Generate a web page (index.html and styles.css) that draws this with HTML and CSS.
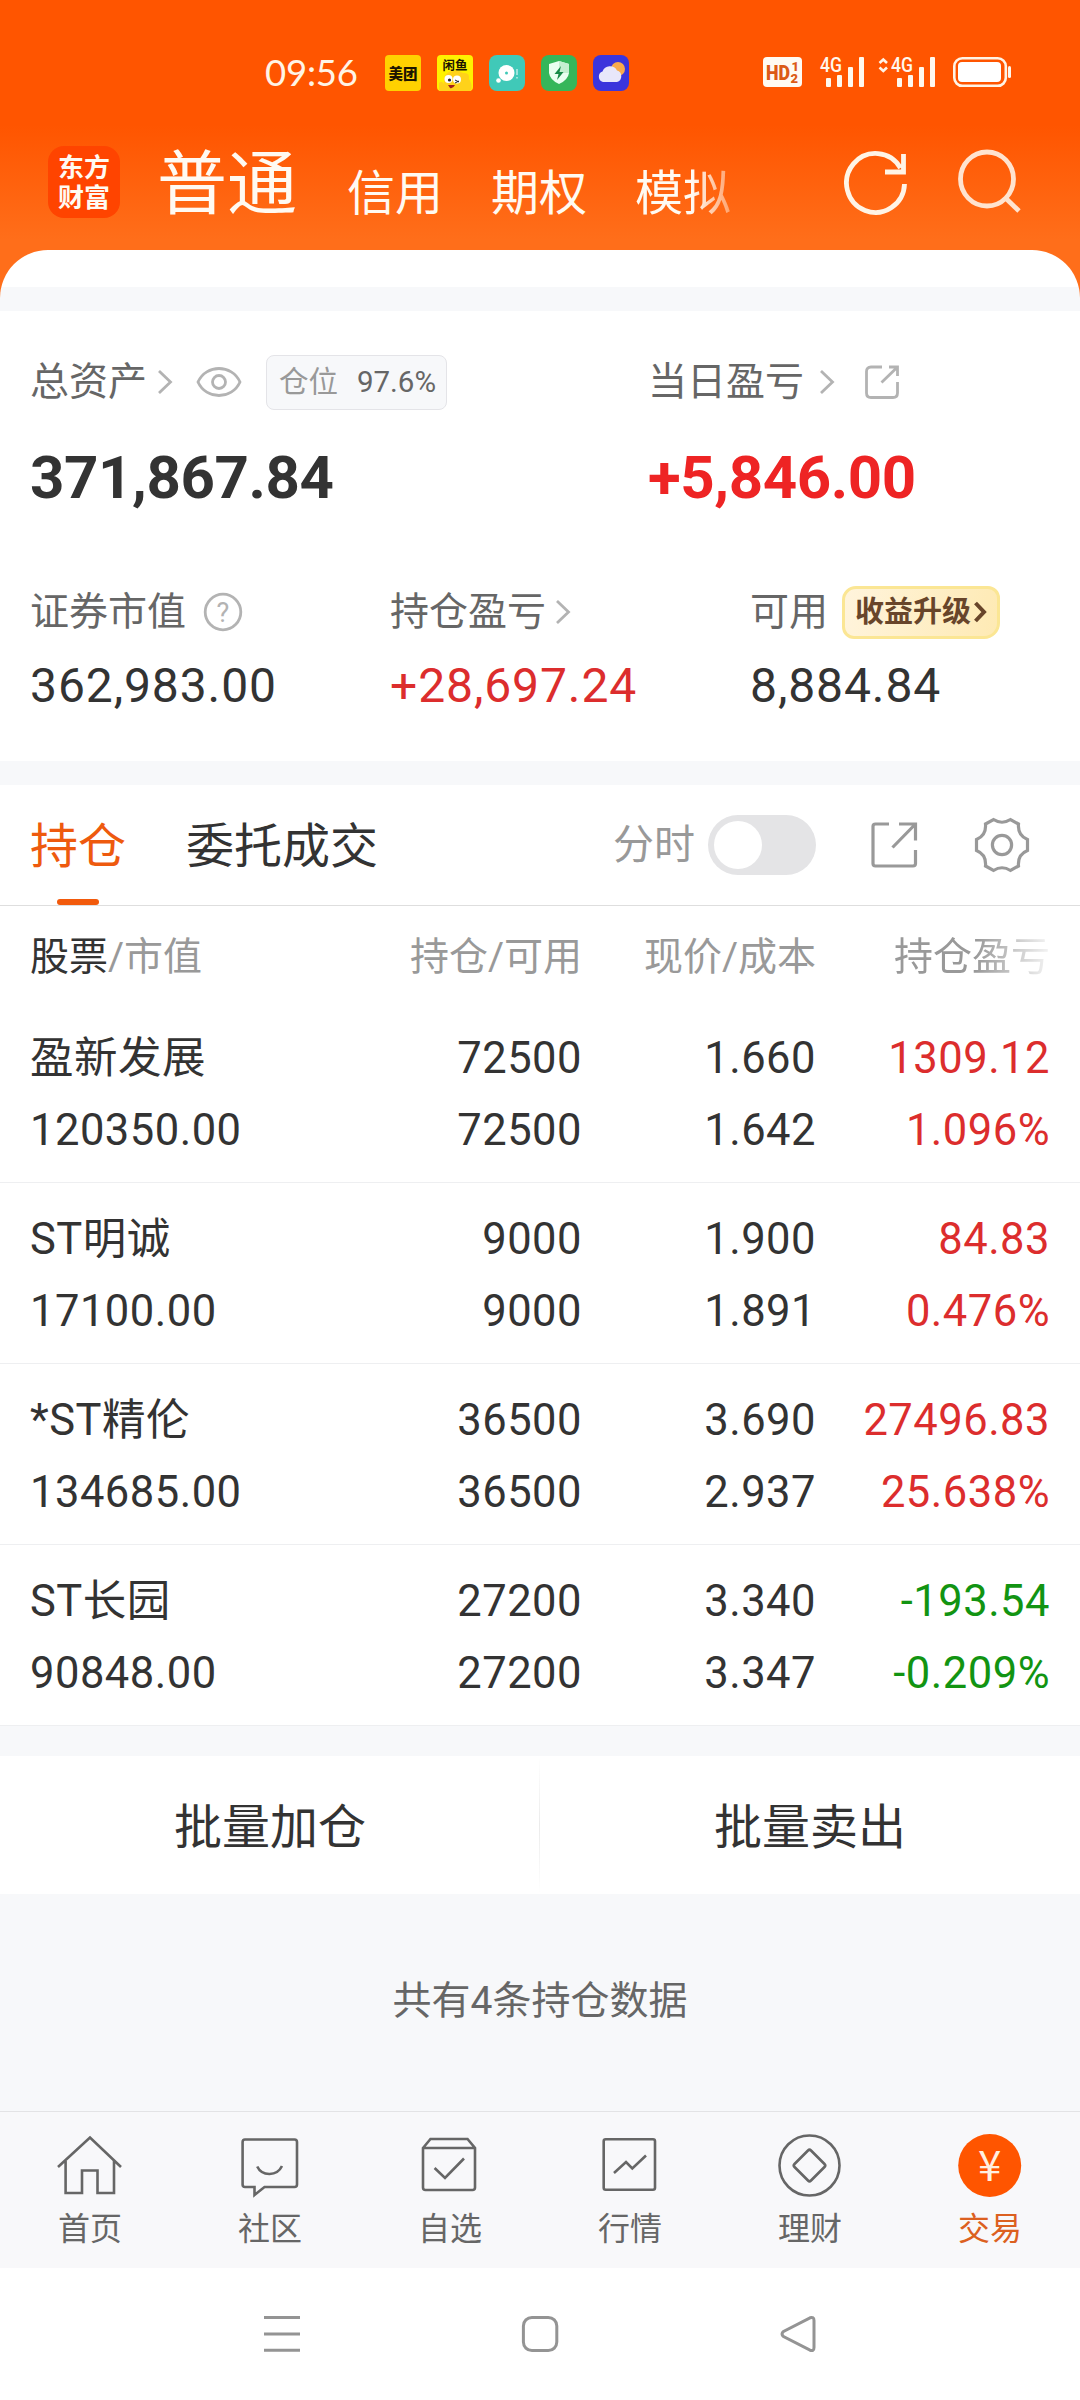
FILE: index.html
```html
<!DOCTYPE html>
<html lang="zh-CN">
<head>
<meta charset="utf-8">
<title>交易</title>
<link rel="stylesheet" href="styles.css">
</head>
<body>
<div class="top">
  <div class="status">
    <span class="clock">09:56</span>
    <div class="apps">
      <svg width="36" height="36" viewBox="0 0 36 36"><rect width="36" height="36" rx="4" fill="#ffd100"/><text x="18" y="23.5" class="app-name" font-size="14.5">美团</text></svg>
      <svg width="36" height="36" viewBox="0 0 36 36"><rect width="36" height="36" rx="4" fill="#fff200"/><text x="18" y="15" class="app-name thin" font-size="12.5">闲鱼</text><path d="M2 36V28Q5 25 7 29Q6 17 16 16Q22 15 26 18Q33 17 32 24Q36 30 34 36Z" fill="#ffd21a"/><circle cx="11.500" cy="24" r="4" fill="#fff"/><circle cx="20" cy="24.500" r="4" fill="#fff"/><circle cx="12.500" cy="25" r="1.600" fill="#222"/><path d="M18 25L22 27M18 28L22 26" stroke="#222" stroke-width="1"/><path d="M11 30H18Q16 34 13 33Z" fill="#a3201a"/></svg>
      <svg width="36" height="36" viewBox="0 0 36 36"><rect width="36" height="36" rx="8" fill="#40c9b8"/><circle cx="17.500" cy="18" r="8" fill="#fff"/><circle cx="17.500" cy="18" r="1.500" fill="#40c9b8"/><circle cx="9.500" cy="25.500" r="2.300" fill="#fff"/><path d="M28 14V20M28 22V23.500" stroke="#b9ece6" stroke-width="1.500"/></svg>
      <svg width="36" height="36" viewBox="0 0 36 36"><rect width="36" height="36" rx="8" fill="#35b65a"/><path d="M18 6L28 9V18Q27 25 18 29Q9 25 8 18V9Z" fill="#e9fff0"/><path d="M18 6L28 9V18H18Z" fill="#c4efd0"/><path d="M20 11L13.500 19H17.500L16 25L22.500 17H18.500Z" fill="#178a46"/></svg>
      <svg width="36" height="36" viewBox="0 0 36 36"><rect width="36" height="36" rx="8" fill="#3b35dc"/><circle cx="25" cy="14" r="7" fill="#f8ab4d"/><path d="M10 27A5.500 5.500 0 0 1 9.500 16.500A8 8 0 0 1 24 15.500A6 6 0 0 1 24 27Z" fill="#e8e7fa"/></svg>
    </div>
    <div class="signals">
      <svg width="250" height="42" viewBox="762 48 250 42">
        <rect x="763" y="57" width="39" height="30" rx="4" fill="#fffaf2"/>
        <text x="766" y="80" class="hd" font-size="21" textLength="24" lengthAdjust="spacingAndGlyphs">HD</text>
        <text x="791.500" y="70.500" class="hd" font-size="13">1</text><text x="790.500" y="83" class="hd" font-size="13">2</text>
        <g fill="#fff8ee">
          <text x="820" y="72" class="net" font-size="20" textLength="22" lengthAdjust="spacingAndGlyphs">4G</text>
          <rect x="826" y="78" width="5" height="9" rx="1"/><rect x="837" y="75" width="5" height="12" rx="1"/><rect x="848" y="67" width="5" height="20" rx="1"/><rect x="859" y="57" width="5" height="30" rx="1"/>
          <text x="891" y="72" class="net" font-size="20" textLength="22" lengthAdjust="spacingAndGlyphs">4G</text>
          <rect x="897" y="78" width="5" height="9" rx="1"/><rect x="908" y="75" width="5" height="12" rx="1"/><rect x="919" y="67" width="5" height="20" rx="1"/><rect x="930" y="57" width="5" height="30" rx="1"/>
          <rect x="958" y="62" width="43" height="20" rx="4" fill="#fff"/><rect x="1008" y="66" width="3" height="12" rx="1.500"/>
        </g>
        <path d="M879.500 63L883.300 59.500L887 63M879.500 67.500L883.300 71L887 67.500" class="line-w" stroke-width="2.600"/>
        <rect x="954.300" y="58.300" width="51.500" height="27.500" rx="8" class="line-w" stroke-width="2.600"/>
      </svg>
    </div>
  </div>
  <div class="header">
    <div class="logo"><span>东方</span><span>财富</span></div>
    <div class="accounts"><span class="current">普通</span><span>信用</span><span>期权</span><span class="fade">模拟</span></div>
    <svg class="refresh" width="64" height="66" viewBox="844 150 64 66"><path d="M904.500 184A29 29.500 0 1 1 900.500 168M903.500 154V172H885" class="line-w" stroke-width="4.800"/></svg>
    <svg width="66" height="66" viewBox="956 148 66 66"><g fill="none" stroke="#ffe3cf" stroke-width="4.800"><ellipse cx="987" cy="179" rx="26.500" ry="27"/><path d="M1005.500 198L1019 211"/></g></svg>
  </div>
  <div class="sheet"></div>
</div>

<section class="summary">
  <div class="main-grid">
    <div>
      <div class="label">总资产<svg class="chev a" width="16" height="26" viewBox="0 0 16 26"><path d="M2 2L13.500 13L2 24"/></svg><svg class="eye" width="48" height="34" viewBox="0 0 48 34"><path d="M3 17C11 -1 37 -1 45 17C37 35 11 35 3 17Z"/><circle cx="24" cy="17" r="6.500"/></svg><span class="tag"><span>仓位</span><b>97.6%</b></span></div>
      <div class="big">371,867.84</div>
    </div>
    <div>
      <div class="label">当日盈亏<svg class="chev b" width="16" height="26" viewBox="0 0 16 26"><path d="M2 2L13.500 13L2 24"/></svg><svg class="share" width="36" height="36" viewBox="0 0 36 36"><path d="M18 3H7Q2.500 3 2.500 7.500V29Q2.500 33.500 7 33.500H29Q33.500 33.500 33.500 29V18M25 3H33.500V12M33 3.500L17.500 18.500"/></svg></div>
      <div class="big up-strong">+5,846.00</div>
    </div>
  </div>
  <div class="sub-grid">
    <div>
      <div class="label">证券市值<svg class="help" width="40" height="40" viewBox="0 0 40 40"><circle cx="20" cy="20" r="17.800"/><text x="20" y="29.500">?</text></svg></div>
      <div class="mid">362,983.00</div>
    </div>
    <div>
      <div class="label">持仓盈亏<svg class="chev c" width="16" height="26" viewBox="0 0 16 26"><path d="M2 2L13.500 13L2 24"/></svg></div>
      <div class="mid up">+28,697.24</div>
    </div>
    <div>
      <div class="label">可用<span class="upgrade">收益升级<svg width="14" height="22" viewBox="0 0 14 22"><path d="M2.500 2L11 11L2.500 20"/></svg></span></div>
      <div class="mid">8,884.84</div>
    </div>
  </div>
</section>

<section class="holdings">
  <div class="tabs">
    <span class="tab on">持仓</span><span class="tab">委托成交</span>
    <span class="minute">分时</span><span class="toggle"><i></i></span>
    <svg class="export" width="50" height="50" viewBox="0 0 50 50"><path d="M20 4H6.500Q4 4 4 6.500V43.500Q4 46 6.500 46H44Q46.500 46 46.500 43.500V30M30 4H46.500V20.500M46 4.500L23.500 27.500"/></svg>
    <svg class="gear" width="58" height="58" viewBox="0 0 58 58"><path d="M20.500 3.500Q29 9 37.500 3.500L45.500 8Q44.500 19.500 54.500 23.500V34.500Q44.500 38.500 45.500 50L37.500 54.500Q29 49 20.500 54.500L12.500 50Q13.500 38.500 3.500 34.500V23.500Q13.500 19.500 12.500 8Z"/><circle cx="29" cy="29" r="9.600"/></svg>
  </div>
  <div class="row head"><span><em>股票</em>/市值</span><span>持仓/可用</span><span>现价/成本</span><span class="fade-end">持仓盈亏</span></div>
  <div class="row"><span>盈新发展<br>120350.00</span><span>72500<br>72500</span><span>1.660<br>1.642</span><span class="up">1309.12<br>1.096%</span></div>
  <div class="row"><span>ST明诚<br>17100.00</span><span>9000<br>9000</span><span>1.900<br>1.891</span><span class="up">84.83<br>0.476%</span></div>
  <div class="row"><span>*ST精伦<br>134685.00</span><span>36500<br>36500</span><span>3.690<br>2.937</span><span class="up">27496.83<br>25.638%</span></div>
  <div class="row"><span>ST长园<br>90848.00</span><span>27200<br>27200</span><span>3.340<br>3.347</span><span class="down">-193.54<br>-0.209%</span></div>
</section>

<div class="batch"><span>批量加仓</span><i></i><span>批量卖出</span></div>
<p class="count">共有4条持仓数据</p>

<nav class="tabbar">
  <a><svg viewBox="0 0 72 72"><path d="M4 37L36 7.500L67 37M11.600 31V63H28V40.500H43.500V63H60V31"/></svg>首页</a>
  <a><svg viewBox="0 0 72 72"><path d="M11 9.500H60.500Q63 9.500 63 12V54.500Q63 57 60.500 57H30.500L20.500 65V57H11Q8.600 57 8.600 54.500V12Q8.600 9.500 11 9.500ZM23.200 36.500C28 46.500 43 46.500 48 36"/></svg>社区</a>
  <a><svg viewBox="0 0 72 72"><path d="M9 18L16.500 9H53.500L61 18V57.500Q61 60 58.500 60H11.500Q9 60 9 57.500ZM9 18H61M20.600 38L31 48L50 28.500"/></svg>自选</a>
  <a><svg viewBox="0 0 72 72"><rect x="9.700" y="9.300" width="51.300" height="50.500" rx="2"/><path d="M20 43L32 32L38.300 38.500L52 25.500"/></svg>行情</a>
  <a><svg viewBox="0 0 72 72"><circle cx="35.500" cy="35.500" r="30"/><path d="M34 20.500Q35.500 19 37 20.500L50.500 34Q52 35.500 50.500 37L37 50.500Q35.500 52 34 50.500L20.500 37Q19 35.500 20.500 34Z"/></svg>理财</a>
  <a class="active"><svg viewBox="0 0 72 72"><circle cx="35.700" cy="35.500" r="31.500" class="disc"/><text x="35.700" y="51">¥</text></svg>交易</a>
</nav>
<div class="sysnav">
  <svg width="40" height="40" viewBox="0 0 40 40"><path d="M2 3.500H38M2 20H38M2 36.300H38"/></svg>
  <svg width="40" height="40" viewBox="0 0 40 40"><rect x="3.400" y="3.400" width="33.400" height="33.200" rx="8.500"/></svg>
  <svg width="40" height="40" viewBox="0 0 40 40"><path d="M32 3.800Q36 2.500 36 6.500V33.500Q36 37.500 32 36.200L5.500 22.500Q2.500 20 5.500 17.500Z"/></svg>
</div>
</body>
</html>
```
FILE: styles.css
```css
* { box-sizing: border-box; }
body {
  margin: 0;
  width: 1080px;
  height: 2400px;
  overflow: hidden;
  background: #f7f8fa;
  color: #333;
  font-family: Roboto, "Noto Sans CJK SC", sans-serif;
}
svg { flex: none; display: block; }
i, em { font-style: normal; }

.top { height: 311px; background: linear-gradient(#ff5500 125px, #ff6e1a 240px); }
.line-w { fill: none; stroke: #fff4e6; }
.status { height: 120px; display: flex; align-items: flex-start; padding: 55px 68px 0 265px; }
.clock { width: 120px; font: 36.500px/34px Lato, sans-serif; letter-spacing: -.2px; color: #fff4e6; }
.apps { display: flex; gap: 16px; }
.signals { margin: -7px 0 0 auto; }
.app-name { font-family: "Noto Sans CJK SC", sans-serif; font-weight: 900; text-anchor: middle; fill: #1c1500; }
.app-name.thin { font-weight: 700; }
.hd { font-family: Roboto, sans-serif; font-weight: 900; fill: #dc5a16; }
.net { font-family: Roboto, sans-serif; font-weight: 500; }

.header { height: 130px; display: flex; align-items: flex-start; padding: 26px 58px 0 48px; color: #fffaf2; }
.logo {
  display: flex; flex-direction: column; align-items: center; width: 72px; height: 72px; padding-top: 5px;
  border-radius: 16px; background: #ff4400; font: 700 26px/30px "Noto Sans CJK SC", sans-serif;
}
.accounts { display: flex; align-items: baseline; gap: 48px; margin-left: 37px; width: 687px; font-size: 48px; line-height: 82px; }
.accounts .current { position: relative; top: -1px; font-size: 70px; margin-right: 2px; line-height: 80px; }
.fade { -webkit-mask-image: linear-gradient(90deg, #000 60%, rgba(0,0,0,.4)); mask-image: linear-gradient(90deg, #000 60%, rgba(0,0,0,.4)); }
.refresh { margin: 4px 48px 0 0; }
.header > svg:last-child { margin-top: 2px; }
.sheet { height: 61px; border-radius: 48px 48px 0 0 / 48px 48px 0 0; background: linear-gradient(#fff 37px, #f7f8fa 37px); }

.summary { height: 450px; padding: 35px 0 0 30px; background: #fff; }
.main-grid { display: grid; grid-template-columns: 618px 1fr; }
.label { display: flex; align-items: center; height: 72px; font-size: 39px; line-height: 46px; color: #666; white-space: nowrap; }
.label svg { fill: none; stroke: #b3b3b3; stroke-width: 2.8; }
.chev.a { margin-left: 10px; }
.chev.b { margin-left: 15px; }
.chev.c { margin-left: 9px; }
.eye { margin-left: 22px; }
.share { margin-left: 29px; }
.help { margin-left: 17px; }
.help text { font-size: 27px; text-anchor: middle; fill: #b3b3b3; stroke: none; }
.tag {
  display: flex; align-items: center; justify-content: space-between; width: 181px; height: 55px;
  margin-left: 23px; padding: 0 10px 0 12px; border: 1px solid #e4e4e8; border-radius: 8px; background: #f7f8fa;
  font-size: 29.500px; color: #999;
}
.tag b { font-weight: 400; color: #666; }
.big { margin-top: 30px; height: 60px; font-size: 60px; line-height: 60px; font-weight: 700; letter-spacing: -.4px; }
.up-strong { color: #ee2424; }
.up { color: #dc2d2d; }
.down { color: #129412; }
.sub-grid { display: grid; grid-template-columns: 360px 360px 1fr; margin-top: 75px; }
.sub-grid .label { height: 58px; }
.mid { margin-top: 17px; font-size: 48px; line-height: 56px; letter-spacing: .9px; }
.upgrade {
  display: flex; align-items: center; gap: 2px; width: 158px; height: 53px; margin-left: 14px; padding-left: 10px;
  border: 3px solid #fbe694; border-radius: 14px 12px 16px 12px; background: linear-gradient(100deg, #fff4dc, #feeab4);
  font-size: 29px; font-weight: 700; color: #68452a;
}
.upgrade svg { stroke: #68452a; stroke-width: 4; }

.holdings { margin-top: 24px; background: #fff; }
.tabs { display: flex; align-items: center; height: 121px; padding: 0 49px 0 30px; border-bottom: 1px solid #dedede; }
.tab { position: relative; margin-right: 60px; padding-top: 4px; font-size: 48px; line-height: 116px; }
.tab.on { color: #ee5a0e; }
.tab.on::after { content: ""; position: absolute; left: 27px; bottom: 0; width: 42px; height: 6px; border-radius: 3px; background: #f25a0c; }
.minute { margin-left: auto; font-size: 41px; line-height: 50px; color: #999; }
.toggle { width: 108px; height: 60px; margin-left: 13px; padding: 6px; border-radius: 30px; background: #e4e4e6; }
.toggle i { display: block; width: 48px; height: 48px; border-radius: 50%; background: #fff; }
.tabs svg { fill: none; stroke: #999; stroke-width: 3.2; }
.export { margin-left: 53px; }
.gear { margin-left: 54px; }
.row {
  display: grid; grid-template-columns: 300px 252px 234px 234px; height: 181px; padding: 21px 30px 0 30px;
  border-bottom: 1px solid #eeeff1; font-size: 43.500px; line-height: 72px; letter-spacing: .5px;
}
.row > :not(:first-child) { text-align: right; }
.row.head { height: 96px; padding-top: 15px; border: 0; font-size: 39px; letter-spacing: 0; color: #999; }
.row em { color: #333; }
.fade-end { -webkit-mask-image: linear-gradient(90deg, #000 68%, rgba(0,0,0,.1)); mask-image: linear-gradient(90deg, #000 68%, rgba(0,0,0,.1)); }

.batch { display: flex; height: 138px; margin-top: 30px; background: #fff; font-size: 48px; line-height: 144px; text-align: center; }
.batch span { flex: 1; }
.batch i { width: 1px; margin-left: -1px; background: linear-gradient(#fff, #ebebeb, #fff); }
.count { height: 217px; margin: 0; font-size: 39px; line-height: 215px; text-align: center; color: #666; }

.tabbar { display: flex; height: 157px; border-top: 1px solid #e3e3e5; background: #f8f8fa; }
.tabbar a { width: 180px; padding-top: 18px; font-size: 32px; line-height: 55px; text-align: center; color: #666; }
.tabbar svg { width: 72px; height: 72px; margin: 0 auto; fill: none; stroke: #666; stroke-width: 2.6; }
.tabbar .active { color: #dc6020; }
.tabbar .disc { fill: #ff5500; stroke: none; }
.tabbar text { font: 42px "Noto Sans CJK SC", sans-serif; text-anchor: middle; fill: #fff0e0; stroke: none; }
.sysnav { display: flex; gap: 218px; height: 132px; padding: 46px 0 0 262px; background: #fff; }
.sysnav svg { fill: none; stroke: #949494; stroke-width: 3; }
```
